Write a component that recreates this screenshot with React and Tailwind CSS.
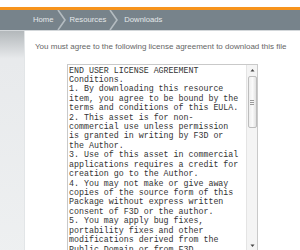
const eula = [
  "END USER LICENSE AGREEMENT",
  "Conditions.",
  "1. By downloading this resource",
  "item, you agree to be bound by the",
  "terms and conditions of this EULA.",
  "2. This asset is for non-",
  "commercial use unless permission",
  "is granted in writing by F3D or",
  "the Author.",
  "3. Use of this asset in commercial",
  "applications requires a credit for",
  "creation go to the Author.",
  "4. You may not make or give away",
  "copies of the source form of this",
  "Package without express written",
  "consent of F3D or the author.",
  "5. You may apply bug fixes,",
  "portability fixes and other",
  "modifications derived from the",
  "Public Domain or from F3D",
];

function Chevron() {
  return (
    <svg width="10" height="20" viewBox="0 0 10 20" className="mx-[3px] shrink-0">
      <path d="M1 0 L8 10 L1 20" fill="none" stroke="#b4bcc1" strokeWidth="1.6" />
    </svg>
  );
}

export default function App() {
  return (
    <div className="w-[300px] h-[250px] overflow-hidden bg-white font-['Liberation_Sans',Arial,sans-serif]">
      <div className="h-[7px] bg-white" />
      <div className="h-[3px] bg-[#f7941d]" />
      <nav className="h-[20px] bg-[#77838b] flex items-center pl-[33px] text-[7.7px] text-[#e4e8ea]">
        <span>Home</span>
        <Chevron />
        <span>Resources</span>
        <Chevron />
        <span className="ml-[2px]">Downloads</span>
      </nav>
      <div className="h-px bg-[#d3d7da]" />
      <div className="flex">
        <div className="w-[25px] shrink-0 h-[230px] bg-gradient-to-b from-[#b3b8bb] via-[#e8eaec] via-[12%] to-[#eef0f1] border-r border-[#e2e5e7]" />
        <div className="flex-1">
          <p className="pl-[10px] pt-[10px] text-[8px] leading-[12px] text-[#666]">
            You must agree to the following license agreement to download this file
          </p>
          <div className="ml-[42px] mt-[11px] w-[191px] h-[190px] border border-[#c9c9c9] bg-white flex overflow-hidden">
            <div className="flex-1 overflow-hidden pl-[1px] pt-[0.5px] font-['Liberation_Mono','Courier_New',monospace] text-[8.3px] leading-[9.42px] text-[#333] whitespace-pre">
              {eula.map((l, i) => (
                <div key={i}>{l}</div>
              ))}
            </div>
            <div className="w-[11px] shrink-0 bg-[#f4f4f4] border-l border-[#e4e4e4] flex flex-col items-center">
              <svg width="7" height="9" viewBox="0 0 7 9" className="mt-[1px]">
                <path d="M1.5 5.5 L3.5 3 L5.5 5.5 Z" fill="#444" />
              </svg>
              <div className="mt-[1px] w-[9px] h-[52px] rounded-[2px] border border-[#bdbdbd] bg-gradient-to-r from-[#eeeeee] via-[#fafafa] to-[#e2e2e2] flex flex-col items-center justify-center gap-[1px]">
                <div className="w-[4px] h-px bg-[#9a9a9a]" />
                <div className="w-[4px] h-px bg-[#9a9a9a]" />
                <div className="w-[4px] h-px bg-[#9a9a9a]" />
              </div>
              <div className="flex-1" />
              <svg width="7" height="9" viewBox="0 0 7 9" className="mb-[3px]">
                <path d="M1.5 3.5 L3.5 6 L5.5 3.5 Z" fill="#444" />
              </svg>
            </div>
          </div>
        </div>
      </div>
    </div>
  );
}
